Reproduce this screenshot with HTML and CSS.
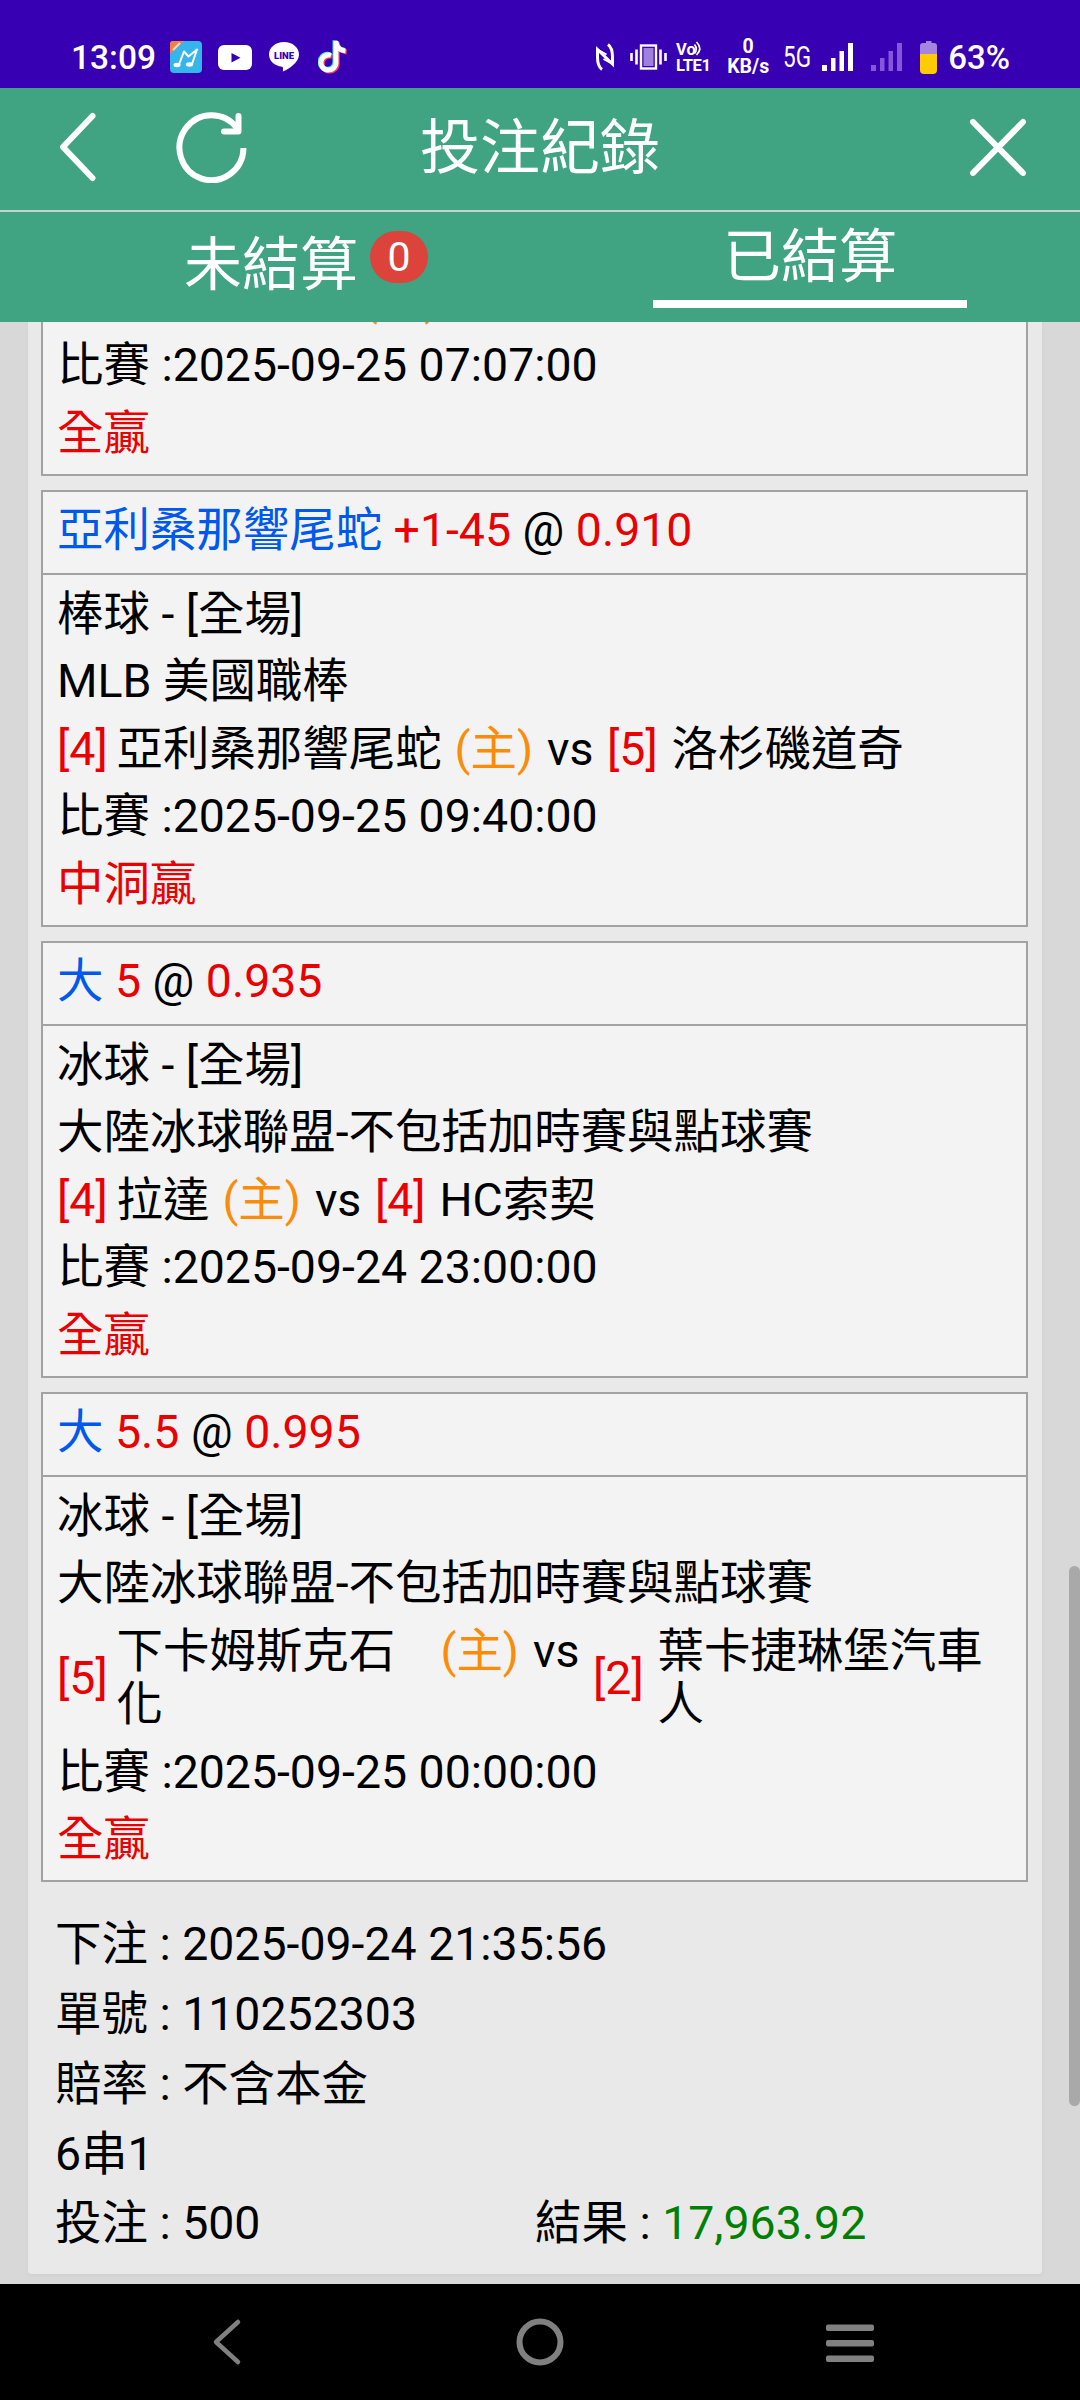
FILE: index.html
```html
<!DOCTYPE html>
<html lang="zh-Hant">
<head>
    <meta charset="UTF-8">
    <meta name="viewport" content="width=device-width, initial-scale=1.0">
    <title>投注紀錄</title>
    <link rel="stylesheet" href="styles.css">
</head>
<body>
    <div class="status-bar">
        <div class="status-left">
            <span class="clock">13:09</span>
            <svg class="app-music" width="32" height="32" viewBox="0 0 32 32">
                <rect width="32" height="32" rx="4" fill="#36b5ea"/>
                <path d="M3 0h11L0 13V3a3 3 0 0 1 3-3z" fill="#f0804a"/>
                <path d="M3 9l7-7" stroke="#ffd9b8" stroke-width="2"/>
                <path d="M9 23.500l5-13 4.500 5 8.500-7-5 14.500" fill="none" stroke="#fff" stroke-width="2" stroke-linejoin="round"/>
                <ellipse cx="7" cy="24" rx="3.500" ry="2.200" fill="#fff"/>
                <ellipse cx="19.500" cy="23.500" rx="3.600" ry="2.200" fill="#fff"/>
            </svg>
            <svg class="app-youtube" width="34" height="25" viewBox="0 0 34 25">
                <rect width="34" height="25" rx="6" fill="#fff"/>
                <path d="M13.500 8v9.500l9-4.700z" fill="#3700b3"/>
            </svg>
            <svg class="app-line" width="30" height="30" viewBox="0 0 30 30">
                <path d="M15 0C6.500 0 0 5.500 0 12.500c0 6.500 5.500 11.300 13 12.300 1.500.3 1 2 .8 4.700 6-2.500 16.200-9 16.200-17C30 5.500 23.500 0 15 0z" fill="#fff"/>
                <text x="15" y="16.500" text-anchor="middle" class="line-text">LINE</text>
            </svg>
            <svg class="app-tiktok" width="30" height="34" viewBox="0 0 30 34">
                <g fill="none" stroke-width="5">
                    <path d="M13 15.500a7.500 7.500 0 1 0 5 7V1M18 2c.5 5 4 8.500 9.500 9" stroke="#fb3b5c" transform="translate(1.200 1)"/>
                    <path d="M13 15.500a7.500 7.500 0 1 0 5 7V1M18 2c.5 5 4 8.500 9.500 9" stroke="#3fe3ee" transform="translate(-1 -.8)"/>
                    <path d="M13 15.500a7.500 7.500 0 1 0 5 7V1M18 2c.5 5 4 8.500 9.500 9" stroke="#fff"/>
                </g>
            </svg>
        </div>
        <div class="status-right">
            <svg class="nfc" width="18" height="28" viewBox="0 0 18 28" fill="none" stroke="#fff" stroke-width="3">
                <path d="M6 26.500C2.500 24 1.500 20 1.500 14V6.500L16.500 21V14c0-6-1-10-4.500-12.500"/>
                <path d="M1.500 6.500l9 5M16.500 21l-9-5" stroke-width="2"/>
            </svg>
            <svg class="vibrate" width="37" height="26" viewBox="0 0 37 26">
                <path d="M1.500 9v8M6.500 5.500v15M30.500 5.500v15M35.500 9v8" stroke="#fff" stroke-width="2.600"/>
                <rect x="11" y="1.500" width="15" height="23" fill="#3700b3" stroke="#fff" stroke-width="2.400"/>
                <rect x="13.500" y="4" width="10" height="18" fill="#9f80dd"/>
            </svg>
            <svg class="volte" width="36" height="32" viewBox="0 0 36 32">
                <text x="0" y="14" class="volte-top">Vo</text>
                <path d="M18.500 3.500q3.500 4.500 0 9M20.500 1q6.500 6.500 0 13" fill="none" stroke="#fff" stroke-width="1.700"/>
                <text x="0" y="29.500" class="volte-bottom" textLength="35">LTE1</text>
            </svg>
            <div class="net-speed"><span>0</span><span>KB/s</span></div>
            <svg class="network" width="29" height="40" viewBox="0 0 29 40">
                <text x="0" y="30" textLength="28" lengthAdjust="spacingAndGlyphs">5G</text>
            </svg>
            <svg class="signal" width="31" height="28" viewBox="0 0 31 28" fill="#fff">
                <path d="M0 22h5v6H0zM9 15h4.500v13H9zM17.500 8h4.500v20h-4.500zM26 0h5v28h-5z"/>
            </svg>
            <svg class="signal-off" width="31" height="28" viewBox="0 0 31 28" fill="#8458d8">
                <path d="M0 22h5v6H0zM9 15h4.500v13H9zM17.500 8h4.500v20h-4.500zM26 0h5v28h-5z"/>
            </svg>
            <svg class="battery" width="17" height="33" viewBox="0 0 17 33">
                <path d="M6 0h5.500v2H14q3 0 3 3v8H0V5q0-3 3-3h3z" fill="#a585df"/>
                <path d="M0 13h17v16q0 4-4 4H4q-4 0-4-4z" fill="#ffcb05"/>
            </svg>
            <span class="percent">63%</span>
        </div>
    </div>

    <header class="header">
        <div class="header-left">
            <svg width="38" height="70" viewBox="0 0 38 70" fill="none" stroke="#fff" stroke-width="6" stroke-linecap="round" stroke-linejoin="round">
                <path d="M33.500 4L4 35l29.500 31"/>
            </svg>
            <svg width="72" height="72" viewBox="0 0 72 72" fill="none" stroke="#fff" stroke-width="6">
                <path d="M67.500 37A32 32.500 0 1 1 61 17"/>
                <path d="M62.500 5v15.500H48" stroke-linecap="round" stroke-linejoin="round"/>
            </svg>
        </div>
        <h1>投注紀錄</h1>
        <div class="header-right">
            <svg width="58" height="58" viewBox="0 0 58 58" stroke="#fff" stroke-width="6" stroke-linecap="round">
                <path d="M4 4l50 51M54 4L4 55"/>
            </svg>
        </div>
    </header>

    <nav class="tabs">
        <div class="tab"><span>未結算</span><span class="badge">0</span></div>
        <div class="tab active"><span>已結算</span></div>
    </nav>

    <main class="content">
        <div class="panel">
            <div class="bet">
                <div class="bet-body">
                    <div class="row teams first-teams"><span class="home">(主)</span></div>
                    <div class="row">比賽 :2025-09-25 07:07:00</div>
                    <div class="row win">全贏</div>
                </div>
            </div>

            <div class="bet">
                <div class="bet-title"><span class="pick">亞利桑那響尾蛇</span> <span class="odds">+1-45</span> @ <span class="odds">0.910</span></div>
                <div class="bet-body">
                    <div class="row">棒球 - [全場]</div>
                    <div class="row">MLB 美國職棒</div>
                    <div class="row teams">
                        <span class="score">[4]</span><span class="team">亞利桑那響尾蛇</span><span class="home">(主)</span><span class="vs">vs</span><span class="score">[5]</span><span class="team away">洛杉磯道奇</span>
                    </div>
                    <div class="row">比賽 :2025-09-25 09:40:00</div>
                    <div class="row win">中洞贏</div>
                </div>
            </div>

            <div class="bet">
                <div class="bet-title"><span class="pick">大</span> <span class="odds">5</span> @ <span class="odds">0.935</span></div>
                <div class="bet-body">
                    <div class="row">冰球 - [全場]</div>
                    <div class="row">大陸冰球聯盟-不包括加時賽與點球賽</div>
                    <div class="row teams">
                        <span class="score">[4]</span><span class="team">拉達</span><span class="home">(主)</span><span class="vs">vs</span><span class="score">[4]</span><span class="team away">HC索契</span>
                    </div>
                    <div class="row">比賽 :2025-09-24 23:00:00</div>
                    <div class="row win">全贏</div>
                </div>
            </div>

            <div class="bet">
                <div class="bet-title"><span class="pick">大</span> <span class="odds">5.5</span> @ <span class="odds">0.995</span></div>
                <div class="bet-body">
                    <div class="row">冰球 - [全場]</div>
                    <div class="row">大陸冰球聯盟-不包括加時賽與點球賽</div>
                    <div class="row teams wrap">
                        <span class="score">[5]</span><span class="team">下卡姆斯克石化</span><span class="home">(主)</span><span class="vs">vs</span><span class="score">[2]</span><span class="team away">葉卡捷琳堡汽車人</span>
                    </div>
                    <div class="row">比賽 :2025-09-25 00:00:00</div>
                    <div class="row win">全贏</div>
                </div>
            </div>

            <div class="summary">
                <div>下注 : 2025-09-24 21:35:56</div>
                <div>單號 : 110252303</div>
                <div>賠率 : 不含本金</div>
                <div>6串1</div>
                <div class="amounts"><span>投注 : 500</span><span>結果 : <span class="profit">17,963.92</span></span></div>
            </div>
        </div>
        <div class="scrollbar"></div>
    </main>

    <footer class="nav-bar">
        <svg width="30" height="48" viewBox="0 0 30 48" fill="none" stroke="#808080" stroke-width="4.500" stroke-linecap="round" stroke-linejoin="round">
            <path d="M26 4L4 24l22 20"/>
        </svg>
        <svg class="nav-home" width="48" height="48" viewBox="0 0 48 48" fill="none" stroke="#808080" stroke-width="6">
            <circle cx="24" cy="24" r="20.500"/>
        </svg>
        <svg class="nav-menu" width="50" height="48" viewBox="0 0 50 48" fill="#808080">
            <rect x="1" y="6.500" width="48" height="6.500" rx="2"/>
            <rect x="1" y="22" width="48" height="6.500" rx="2"/>
            <rect x="1" y="37.500" width="48" height="6.500" rx="2"/>
        </svg>
    </footer>
</body>
</html>
```
FILE: styles.css
```css
* {
    box-sizing: border-box;
}
body {
    margin: 0;
    width: 1080px;
    height: 2400px;
    overflow: hidden;
    display: flex;
    flex-direction: column;
    font-family: Roboto, "Noto Sans CJK TC", sans-serif;
    font-size: 46.45px;
    color: #000;
    background: #d8d8d8;
}
svg {
    display: block;
    flex: none;
}

/* status bar */
.status-bar {
    height: 88px;
    flex: none;
    padding: 26px 70px 0 71px;
    display: flex;
    justify-content: space-between;
    background: #3700b3;
    color: #fff;
}
.status-left,
.status-right {
    height: 62px;
    display: flex;
    align-items: center;
}
.clock {
    width: 99px;
    font-size: 33.5px;
    font-weight: 500;
}
.app-youtube {
    margin-left: 16px;
}
.app-line {
    margin-left: 17px;
}
.app-tiktok {
    margin-left: 19px;
}
.line-text {
    font-size: 9.5px;
    font-weight: 900;
    fill: #3700b3;
}
.vibrate {
    margin-left: 16px;
}
.volte {
    margin-left: 9px;
}
.volte-top,
.volte-bottom {
    font-size: 16.5px;
    font-weight: 700;
    fill: #fff;
}
.net-speed {
    width: 42px;
    margin-left: 15px;
    display: flex;
    flex-direction: column;
    align-items: center;
    font-size: 19.5px;
    line-height: 20.5px;
    font-weight: 700;
}
.network {
    margin: 0 10px 0 14px;
    font-size: 29.5px;
    fill: #fff;
}
.signal-off {
    margin-left: 18px;
}
.battery {
    margin-left: 18px;
}
.percent {
    margin-left: 11px;
    font-size: 33px;
    font-weight: 500;
}

/* title bar */
.header {
    height: 124px;
    flex: none;
    display: grid;
    grid-template-columns: 1fr auto 1fr;
    align-items: center;
    padding: 0 53px 5px;
    background: #40a381;
    border-bottom: 2px solid #c4d3cd;
    color: #fff;
}
.header h1 {
    margin: 0;
    padding-top: 4px;
    font-size: 60px;
    line-height: 80px;
    font-weight: 400;
}
.header-left {
    display: flex;
    align-items: center;
    gap: 79px;
    padding-left: 6px;
}
.header-right {
    display: flex;
    justify-content: flex-end;
}

/* tabs */
.tabs {
    height: 110px;
    flex: none;
    display: flex;
    background: #40a381;
    color: #fff;
    font-size: 58px;
}
.tab {
    width: 314px;
    height: 96px;
    margin-left: 149px;
    display: flex;
    justify-content: center;
    align-items: center;
}
.tab.active {
    margin-left: 190px;
    padding-bottom: 8px;
    border-bottom: 8px solid #fff;
}
.badge {
    width: 58px;
    height: 52px;
    margin: -6px 0 0 12px;
    border-radius: 26px;
    background: #db433b;
    font-size: 41px;
    line-height: 52px;
    text-align: center;
}

/* bet list */
.content {
    position: relative;
    height: 1962px;
    flex: none;
    overflow: hidden;
    display: flex;
    flex-direction: column;
    justify-content: flex-end;
    padding: 0 38px 10px 28px;
}
.panel {
    background: #e9e9e9;
    padding: 0 14px 15px 13px;
    border-radius: 4px;
    box-shadow: 0 2px 4px #d0d0d0;
}
.bet {
    margin-bottom: 14px;
    border: 2px solid #a2a2a2;
    background: #f3f3f3;
}
.bet-title {
    height: 83px;
    padding-left: 14px;
    border-bottom: 2px solid #a2a2a2;
    line-height: 77px;
}
.bet-body {
    padding: 6px 0 7px 14px;
}
.row {
    line-height: 53.4px;
    padding: 7px 0;
}
.teams {
    display: flex;
    align-items: center;
}
.first-teams {
    padding-left: 292px;
}
.pick {
    color: #0059ea;
}
.odds,
.score,
.win {
    color: #ea0000;
}
.score {
    width: 59.5px;
}
.home {
    color: #fa8c0a;
    margin-left: 13px;
}
.vs {
    width: 60px;
    margin-left: 14px;
}
.away {
    margin-left: 5px;
}
.wrap .team {
    width: 311px;
}
.wrap .away {
    width: 330px;
}
.wrap .home,
.wrap .vs {
    align-self: flex-start;
}

/* ticket summary */
.summary {
    padding: 14px 0 0 14px;
    line-height: 69.7px;
}
.amounts {
    display: flex;
}
.amounts > span {
    width: 480px;
}
.profit {
    color: #008000;
}
.scrollbar {
    position: absolute;
    right: 0;
    top: 1244px;
    width: 11px;
    height: 540px;
    border-radius: 6px;
    background: #a9a9a9;
}

/* system navigation */
.nav-bar {
    height: 116px;
    flex: none;
    display: flex;
    padding: 34px 0 0 212px;
    background: #000;
}
.nav-home {
    margin-left: 274px;
}
.nav-menu {
    margin-left: 261px;
}
```
